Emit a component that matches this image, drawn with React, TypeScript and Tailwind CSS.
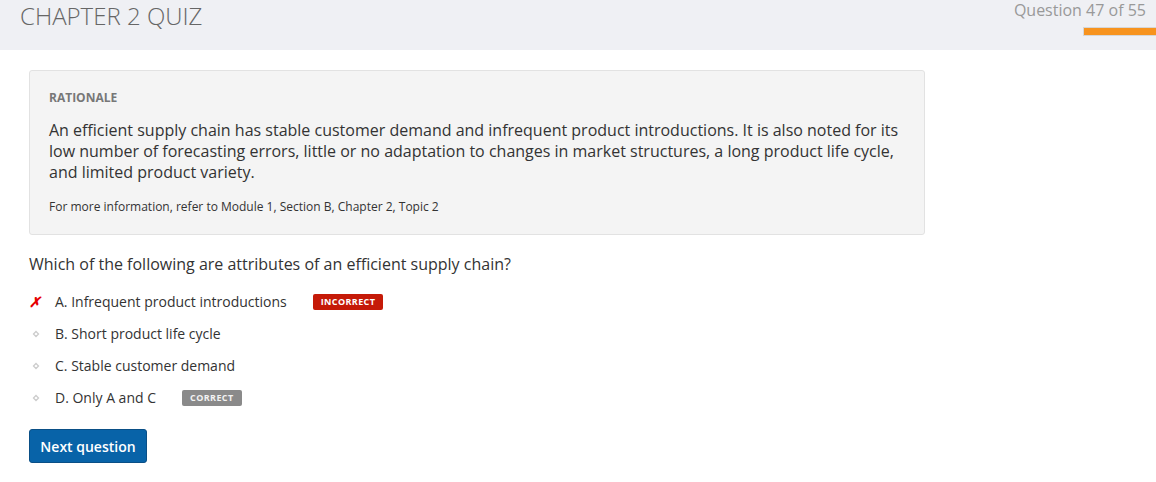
import React from "react";

const options = [
  { label: "A. Infrequent product introductions", mark: "wrong", badge: "INCORRECT" },
  { label: "B. Short product life cycle", mark: "none" },
  { label: "C. Stable customer demand", mark: "none" },
  { label: "D. Only A and C", mark: "none", badge: "CORRECT" },
];

const Bullet = ({ mark }: { mark: string }) =>
  mark === "wrong" ? (
    <span className="w-[26px] text-[14px] font-bold italic text-[#e60000] leading-none">✗</span>
  ) : (
    <span className="flex w-[26px] pl-[3px]">
      <svg width="8" height="8" viewBox="0 0 8 8">
        <path d="M4 1.5 L6.5 4 L4 6.5 L1.5 4 Z" fill="none" stroke="#cccccc" strokeWidth="1.3" />
      </svg>
    </span>
  );

export default function App() {
  return (
    <div className="min-h-[482px] bg-white font-['Open_Sans',sans-serif] text-[#333]">
      {/* header */}
      <div className="flex h-[50px] justify-between bg-[#eff0f4]">
        <h1 className="pl-[20px] text-[24px] font-light leading-[32px] text-[#666]">
          CHAPTER 2 QUIZ
        </h1>
        <div className="flex flex-col items-end">
          <div className="pr-[10px] text-[16px] leading-[21px] text-[#999]">Question 47 of 55</div>
          <div className="mt-[6px] h-[9px] w-[73px] border border-[#d6d6d6] border-r-0 bg-[#f7931e]" />
        </div>
      </div>

      <div className="pl-[29px] pt-[20px]">
        {/* rationale */}
        <div className="w-[896px] rounded-[3px] border border-[#e2e2e2] bg-[#f4f4f4] px-[19px] pt-[18px] pb-[18px]">
          <div className="text-[12px] font-bold leading-[18px] text-[#777]">RATIONALE</div>
          <p className="mt-[13px] text-[16px] leading-[21px] text-[#333]">
            An efficient supply chain has stable customer demand and infrequent product introductions. It is also noted for its
            low number of forecasting errors, little or no adaptation to changes in market structures, a long product life cycle,
            and limited product variety.
          </p>
          <p className="mt-[15px] text-[12px] leading-[18px] text-[#333]">
            For more information, refer to Module 1, Section B, Chapter 2, Topic 2
          </p>
        </div>

        {/* question */}
        <div className="mt-[18px] text-[16px] leading-[22px] text-[#333]">
          Which of the following are attributes of an efficient supply chain?
        </div>

        <div className="mt-[17px] flex flex-col gap-[12px]">
          {options.map((o) => (
            <div key={o.label} className="flex h-[20px] items-center">
              <Bullet mark={o.mark} />
              <span className="text-[14px] leading-[20px] text-[#333]">{o.label}</span>
              {o.badge && (
                <span
                  className={
                    o.badge === "INCORRECT"
                      ? "ml-[26px] rounded-[2px] bg-[#c51a08] px-[8px] text-[9px] font-bold leading-[16px] tracking-[0.4px] text-white"
                      : "ml-[26px] rounded-[2px] bg-[#8a8a8a] px-[8px] text-[9px] font-bold leading-[16px] tracking-[0.4px] text-[#f2f2f2]"
                  }
                >
                  {o.badge}
                </span>
              )}
            </div>
          ))}
        </div>

        <button className="mt-[21px] h-[34px] w-[118px] rounded-[3px] border border-[#0a4f86] bg-[#0863a8] text-[14px] font-semibold text-white">
          Next question
        </button>
      </div>
    </div>
  );
}
